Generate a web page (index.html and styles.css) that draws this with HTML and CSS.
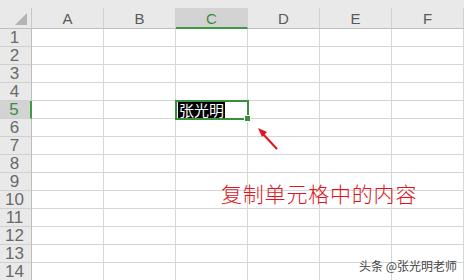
FILE: index.html
```html
<!DOCTYPE html>
<html>
<head>
<meta charset="utf-8">
<link rel="stylesheet" href="styles.css">
</head>
<body>
<div class="sheet">
  <div class="hdr">
    <div class="corner"><span class="tri"></span></div>
    <div class="ch">A</div>
    <div class="ch">B</div>
    <div class="ch active">C</div>
    <div class="ch">D</div>
    <div class="ch">E</div>
    <div class="ch">F</div>
  </div>
  <div class="row"><div class="rh">1</div><div class="c"></div><div class="c"></div><div class="c"></div><div class="c"></div><div class="c"></div><div class="c"></div></div>
  <div class="row"><div class="rh">2</div><div class="c"></div><div class="c"></div><div class="c"></div><div class="c"></div><div class="c"></div><div class="c"></div></div>
  <div class="row"><div class="rh">3</div><div class="c"></div><div class="c"></div><div class="c"></div><div class="c"></div><div class="c"></div><div class="c"></div></div>
  <div class="row"><div class="rh">4</div><div class="c"></div><div class="c"></div><div class="c"></div><div class="c"></div><div class="c"></div><div class="c"></div></div>
  <div class="row"><div class="rh active">5</div><div class="c"></div><div class="c"></div><div class="c selcell"><span class="val">张光明</span><span class="sel"></span><span class="handle"></span></div><div class="c"></div><div class="c"></div><div class="c"></div></div>
  <div class="row"><div class="rh">6</div><div class="c"></div><div class="c"></div><div class="c"></div><div class="c"></div><div class="c"></div><div class="c"></div></div>
  <div class="row"><div class="rh">7</div><div class="c"></div><div class="c"></div><div class="c"></div><div class="c"></div><div class="c"></div><div class="c"></div></div>
  <div class="row"><div class="rh">8</div><div class="c"></div><div class="c"></div><div class="c"></div><div class="c"></div><div class="c"></div><div class="c"></div></div>
  <div class="row"><div class="rh">9</div><div class="c"></div><div class="c"></div><div class="c"></div><div class="c"></div><div class="c"></div><div class="c"></div></div>
  <div class="row"><div class="rh">10</div><div class="c"></div><div class="c"></div><div class="c"></div><div class="c"></div><div class="c"></div><div class="c"></div></div>
  <div class="row"><div class="rh">11</div><div class="c"></div><div class="c"></div><div class="c"></div><div class="c"></div><div class="c"></div><div class="c"></div></div>
  <div class="row"><div class="rh">12</div><div class="c"></div><div class="c"></div><div class="c"></div><div class="c"></div><div class="c"></div><div class="c"></div></div>
  <div class="row"><div class="rh">13</div><div class="c"></div><div class="c"></div><div class="c"></div><div class="c"></div><div class="c"></div><div class="c"></div></div>
  <div class="row"><div class="rh">14</div><div class="c"></div><div class="c"></div><div class="c"></div><div class="c"></div><div class="c"></div><div class="c"></div></div>

  <svg class="arrow" width="30" height="30" viewBox="0 0 30 30">
    <line x1="24" y1="25" x2="9" y2="9" stroke="#e0141c" stroke-width="2"/>
    <polygon points="5,4 14,8 9,13" fill="#e0141c"/>
  </svg>
  <div class="note">复制单元格中的内容</div>
  <div class="wm">头条 @张光明老师</div>
</div>
</body>
</html>
```
FILE: styles.css
```css
html, body {
  margin: 0;
  padding: 0;
  background: #ffffff;
}
.sheet {
  position: relative;
  width: 464px;
  height: 280px;
  overflow: hidden;
  font-family: "Liberation Sans", "Noto Sans CJK SC", sans-serif;
}
.hdr {
  display: grid;
  grid-template-columns: 32px repeat(6, 72px);
  padding-top: 8px;
  background: #e9e9e9;
}
.corner {
  height: 20px;
  border-bottom: 1px solid #bdbdbd;
  border-right: 1px solid #c8c8c8;
  box-sizing: content-box;
  width: 31px;
  position: relative;
}
.tri {
  position: absolute;
  right: 4px;
  bottom: 3px;
  width: 0;
  height: 0;
  border-left: 12px solid transparent;
  border-bottom: 12px solid #b4b4b4;
}
.ch {
  height: 20px;
  line-height: 22px;
  text-align: center;
  font-size: 15px;
  color: #5a5a5a;
  border-bottom: 1px solid #bdbdbd;
  border-right: 1px solid #d2d2d2;
  width: 71px;
}
.ch.active {
  background: #d3d3d3;
  color: #3d8b40;
  height: 19px;
  border-bottom: 2px solid #3e9a44;
}
.row {
  display: grid;
  grid-template-columns: 32px repeat(6, 72px);
  height: 18px;
}
.rh {
  background: #e9e9e9;
  color: #6a6a6a;
  font-size: 17px;
  line-height: 18px;
  text-align: center;
  padding-right: 2px;
  width: 29px;
  height: 17px;
  border-bottom: 1px solid #d0d0d0;
  border-right: 1px solid #bdbdbd;
}
.rh.active {
  background: #d3d3d3;
  color: #3d8b40;
  width: 28px;
  border-right: 2px solid #3e9a44;
}
.c {
  width: 71px;
  height: 17px;
  border-bottom: 1px solid #d6d6d6;
  border-right: 1px solid #d6d6d6;
}
.selcell {
  position: relative;
}
.val {
  position: absolute;
  left: 2px;
  top: 1px;
  background: #000000;
  color: #ffffff;
  font-family: "Noto Sans CJK SC", sans-serif;
  font-size: 15px;
  line-height: 16px;
  padding: 0 1px;
}
.sel {
  position: absolute;
  left: -1px;
  top: -1px;
  width: 70px;
  height: 16px;
  border: 2px solid #3a8f3e;
}
.handle {
  position: absolute;
  right: -4px;
  bottom: -4px;
  width: 5px;
  height: 5px;
  background: #3a8f3e;
  border: 1px solid #ffffff;
}
.arrow {
  position: absolute;
  left: 253px;
  top: 124px;
}
.note {
  position: absolute;
  left: 221px;
  top: 180px;
  color: #e0141c;
  font-family: "Noto Sans CJK SC", serif;
  font-weight: 300;
  font-size: 21px;
  line-height: 26px;
  letter-spacing: 0.8px;
}
.wm {
  position: absolute;
  left: 359px;
  top: 257px;
  color: #444444;
  font-family: "Noto Sans CJK SC", sans-serif;
  font-size: 12px;
  line-height: 18px;
}
```
